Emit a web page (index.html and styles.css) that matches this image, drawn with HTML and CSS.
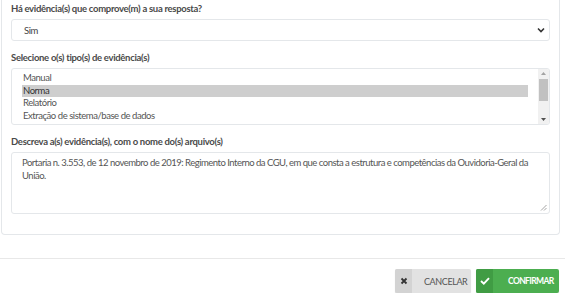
FILE: index.html
```html
<!DOCTYPE html>
<html lang="pt-BR">
<head>
<meta charset="utf-8">
<title>Evidências</title>
<link rel="stylesheet" href="styles.css">
</head>
<body>
<div class="panel">
  <div class="group g1">
    <label class="lbl">Há evidência(s) que comprove(m) a sua resposta?</label>
    <div class="select">
      <span>Sim</span>
      <svg class="chev" width="8" height="6" viewBox="0 0 8 6"><path d="M1 1.5 L4 4.5 L7 1.5" fill="none" stroke="#333" stroke-width="1.6"/></svg>
    </div>
  </div>
  <div class="group g2">
    <label class="lbl">Selecione o(s) tipo(s) de evidência(s)</label>
    <div class="listbox">
      <div class="options">
        <div class="opt">Manual</div>
        <div class="opt sel">Norma</div>
        <div class="opt">Relatório</div>
        <div class="opt">Extração de sistema/base de dados</div>
        <div class="opt">Vídeo/Fotografia</div>
      </div>
      <div class="scrollbar">
        <svg class="arr" width="11" height="9" viewBox="0 0 11 9"><path d="M3 6 L5.5 3 L8 6 Z" fill="#a3a3a3"/></svg>
        <div class="thumb"></div>
        <div class="spacer"></div>
        <svg class="arr" width="11" height="9" viewBox="0 0 11 9"><path d="M3 3 L5.5 6 L8 3 Z" fill="#505050"/></svg>
      </div>
    </div>
  </div>
  <div class="group g3">
    <label class="lbl">Descreva a(s) evidência(s), com o nome do(s) arquivo(s)</label>
    <div class="textarea">
      Portaria n. 3.553, de 12 novembro de 2019: Regimento Interno da CGU, em que consta a estrutura e competências da Ouvidoria-Geral da União.
      <svg class="grip" width="7" height="7" viewBox="0 0 7 7"><path d="M6.5 1 L1 6.5 M6.5 4 L4 6.5" stroke="#9a9a9a" stroke-width="0.9"/></svg>
    </div>
  </div>
</div>
<div class="footer">
  <button class="btn cancel"><span class="ico">
    <svg width="8" height="8" viewBox="0 0 8 8"><path d="M1.5 1.5 L6.5 6.5 M6.5 1.5 L1.5 6.5" stroke="#333" stroke-width="1.8"/></svg>
  </span><span class="txt">CANCELAR</span></button>
  <button class="btn confirm"><span class="ico">
    <svg width="10" height="8" viewBox="0 0 10 8"><path d="M1 4 L3.8 6.6 L9 1.2" fill="none" stroke="#fff" stroke-width="1.9"/></svg>
  </span><span class="txt">CONFIRMAR</span></button>
</div>
</body>
</html>
```
FILE: styles.css
```css
html, body {
  margin: 0;
  padding: 0;
  background: #fff;
  font-family: Lato, "Open Sans", sans-serif;
  font-size: 9.5px;
  letter-spacing: -0.45px;
  color: #555;
}
.panel {
  margin: 0 5px 0 1px;
  border: 1px solid #e4e7ea;
  border-top: 0;
  border-radius: 0 0 4px 4px;
  padding: 2px 9px 20px 9px;
}
.group { display: flex; flex-direction: column; }
.group.g1, .group.g2 { margin-bottom: 10px; }
.lbl {
  font-weight: 700;
  letter-spacing: -0.3px;
  color: #4a4a4a;
  line-height: 14px;
  height: 14px;
  margin-bottom: 3px;
}
.select {
  height: 20px;
  border: 1px solid #e4e7ea;
  border-radius: 3px;
  display: flex;
  align-items: center;
  justify-content: space-between;
  padding: 0 4px 0 12px;
  color: #444;
}
.listbox {
  height: 55px;
  border: 1px solid #e4e7ea;
  border-radius: 3px;
  display: flex;
  overflow: hidden;
}
.options {
  flex: 1;
  padding: 3px 10px 0 10px;
  overflow: hidden;
}
.opt {
  height: 12.5px;
  line-height: 12.5px;
  padding-left: 1px;
  color: #555;
  white-space: nowrap;
}
.opt.sel { background: #cecece; color: #333; }
.scrollbar {
  width: 11px;
  background: #f1f1f1;
  display: flex;
  flex-direction: column;
}
.arr { display: block; flex: none; }
.thumb {
  height: 22px;
  margin: 1px 1px 0 1px;
  background: #c1c1c1;
}
.spacer { flex: 1; }
.textarea {
  position: relative;
  height: 53px;
  border: 1px solid #e4e7ea;
  border-radius: 3px;
  padding: 3px 10px 4px 10px;
  line-height: 13px;
  letter-spacing: -0.5px;
  color: #555;
}
.grip { position: absolute; right: 2px; bottom: 2px; }
.footer {
  margin-top: 23px;
  border-top: 1px solid #e8e8e8;
  padding: 10px 6px 0 0;
  display: flex;
  justify-content: flex-end;
  gap: 5px;
}
.btn {
  height: 24px;
  border: 0;
  border-radius: 2px;
  padding: 0;
  display: flex;
  align-items: stretch;
  font-family: Lato, "Open Sans", sans-serif;
  font-size: 9px;
  letter-spacing: -0.4px;
  box-shadow: 0 1px 1px rgba(0,0,0,0.12);
}
.btn .ico {
  width: 17px;
  flex: none;
  display: flex;
  align-items: center;
  justify-content: center;
  border-radius: 2px 0 0 2px;
}
.btn .txt {
  display: flex;
  align-items: center;
  white-space: nowrap;
}
.cancel { width: 76px; background: #e2e2e2; color: #555; }
.cancel .ico { background: #d3d3d3; }
.cancel .txt { padding-left: 12px; }
.confirm {
  width: 83px;
  background: #4cae50;
  color: #fff;
  font-weight: 700;
  font-size: 8.5px;
  letter-spacing: -0.6px;
}
.confirm .ico { background: #409c44; }
.confirm .txt { padding-left: 15px; }
```
